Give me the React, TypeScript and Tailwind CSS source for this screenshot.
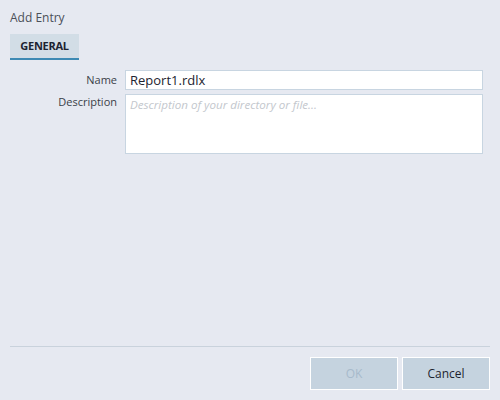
export default function App() {
  return (
    <div
      className="w-[500px] h-[400px] bg-[#e6e9f1] flex flex-col text-[12px] text-[#1d2330]"
      style={{ fontFamily: '"Open Sans", "Noto Sans", sans-serif' }}
    >
      {/* Header */}
      <div className="px-[10px] pt-[9px]">
        <p className="text-[12px] leading-[18px] text-[#4a4f58]">Add Entry</p>
        <div className="mt-[7px] flex">
          <button className="w-[69px] h-[26px] bg-[#d2dde6] border-b-2 border-[#3c89b3] text-[11px] font-bold tracking-tight text-[#1d2330]">
            GENERAL
          </button>
        </div>
      </div>

      {/* Form */}
      <div className="flex flex-col gap-[4px] pt-[10px] pr-[17px]">
        <div className="flex items-center">
          <label className="w-[117px] text-right text-[11px] text-[#3a3f48]">Name</label>
          <input
            className="ml-[8px] flex-1 h-[20px] bg-white border border-[#c8d5e1] px-[4px] text-[13px] text-[#1d2330] outline-none"
            defaultValue="Report1.rdlx"
          />
        </div>
        <div className="flex items-start">
          <label className="w-[117px] text-right text-[11px] text-[#3a3f48] leading-[16px]">
            Description
          </label>
          <textarea
            className="ml-[8px] flex-1 h-[60px] bg-white border border-[#c8d5e1] px-[4px] pt-[1px] text-[11.6px] italic leading-[17px] resize-none outline-none placeholder:text-[#c3c7cd]"
            placeholder="Description of your directory or file..."
          />
        </div>
      </div>

      <div className="flex-1" />

      {/* Footer */}
      <div className="mx-[10px] border-t border-[#c9d2dc]" />
      <div className="flex justify-end gap-[4px] pt-[10px] pb-[10px] pr-[10px]">
        <button className="w-[88px] h-[33px] bg-[#c5d3df] border border-white text-[12px] text-[#a7bacb]">
          OK
        </button>
        <button className="w-[88px] h-[33px] bg-[#c5d3df] border border-white text-[12px] text-[#1d2330]">
          Cancel
        </button>
      </div>
    </div>
  );
}
